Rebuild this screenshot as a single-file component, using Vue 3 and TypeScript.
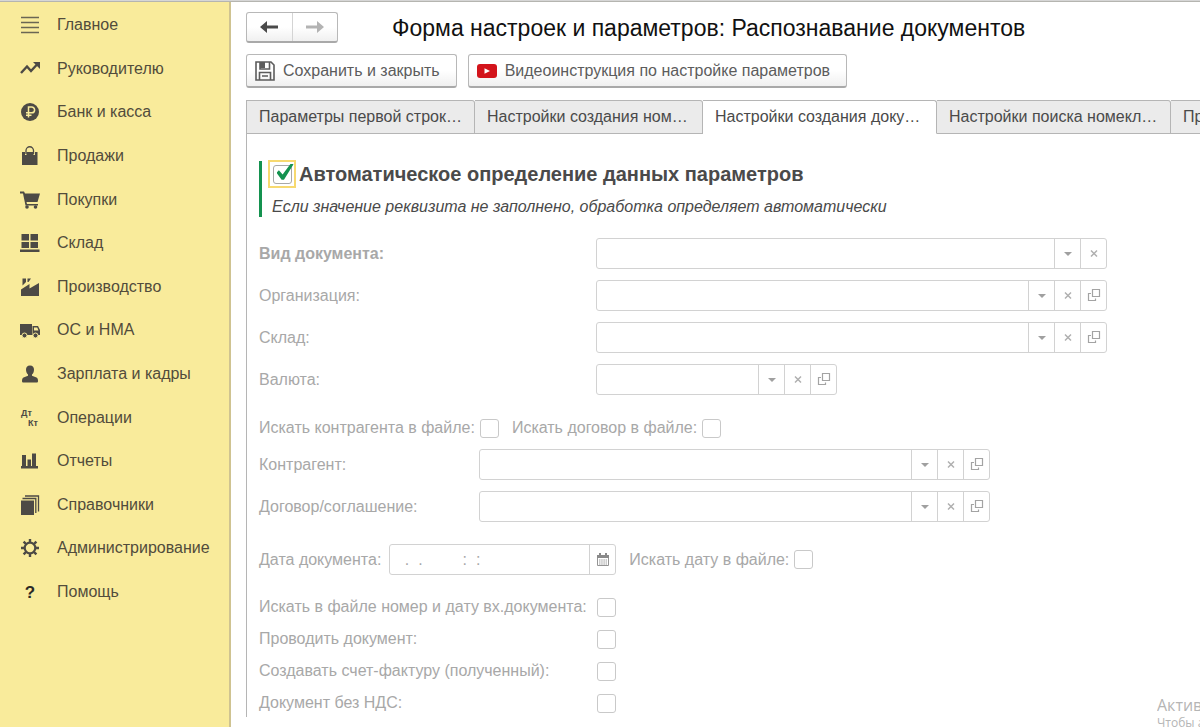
<script setup lang="ts">
import { ref } from 'vue'

interface Section { id: string; title: string }
interface PickerField { id: string; label: string; bold?: boolean; size: 'wide' | 'short'; open: boolean }
interface Flag { id: string; label: string }

const sections: Section[] = [
  { id: 'main', title: 'Главное' },
  { id: 'manager', title: 'Руководителю' },
  { id: 'bank', title: 'Банк и касса' },
  { id: 'sales', title: 'Продажи' },
  { id: 'purchases', title: 'Покупки' },
  { id: 'stock', title: 'Склад' },
  { id: 'production', title: 'Производство' },
  { id: 'assets', title: 'ОС и НМА' },
  { id: 'salary', title: 'Зарплата и кадры' },
  { id: 'operations', title: 'Операции' },
  { id: 'reports', title: 'Отчеты' },
  { id: 'catalogs', title: 'Справочники' },
  { id: 'admin', title: 'Администрирование' },
  { id: 'help', title: 'Помощь' },
]

const tabs: string[] = [
  'Параметры первой строк…',
  'Настройки создания ном…',
  'Настройки создания доку…',
  'Настройки поиска номекл…',
  'Прочие настройки',
]
const activeTab = ref(2)
const autoDetect = ref(true)
const documentDate = ref(' .  .         :  :  ')

const mainFields: PickerField[] = [
  { id: 'kind', label: 'Вид документа:', bold: true, size: 'wide', open: false },
  { id: 'org', label: 'Организация:', size: 'wide', open: true },
  { id: 'store', label: 'Склад:', size: 'wide', open: true },
  { id: 'currency', label: 'Валюта:', size: 'short', open: true },
]
const partnerFields: PickerField[] = [
  { id: 'partner', label: 'Контрагент:', size: 'wide', open: true },
  { id: 'contract', label: 'Договор/соглашение:', size: 'wide', open: true },
]
const groups = [
  { name: 'main', fields: mainFields },
  { name: 'partner', fields: partnerFields },
]
const searchFlags: Flag[] = [
  { id: 'find-partner', label: 'Искать контрагента в файле:' },
  { id: 'find-contract', label: 'Искать договор в файле:' },
]
const flags: Flag[] = [
  { id: 'find-number', label: 'Искать в файле номер и дату вх.документа:' },
  { id: 'post', label: 'Проводить документ:' },
  { id: 'invoice', label: 'Создавать счет-фактуру (полученный):' },
  { id: 'no-vat', label: 'Документ без НДС:' },
]
</script>

<template>
  <div class="app">
    <div class="strip"></div>
    <div class="body">
      <nav class="sidebar">
        <a v-for="s in sections" :key="s.id" href="#" class="section">
          <svg class="section-icon" viewBox="0 0 20 20" aria-hidden="true">
            <path v-if="s.id === 'main'" d="M1 2.500h18M1 7.500h18M1 12.500h18M1 17.500h18" fill="none" stroke="#6b6653" stroke-width="1.300" />
            <g v-else-if="s.id === 'manager'">
              <path d="M1 14L7 7.500l4 4.500L17 5.500" fill="none" stroke="#4d4a45" stroke-width="2.400" />
              <path d="M13 3h7v7z" />
            </g>
            <g v-else-if="s.id === 'bank'">
              <circle cx="10" cy="10" r="9" />
              <path d="M8.500 15.500V5h3.200a2.900 2.900 0 0 1 0 5.800H6M6 13.200h5.500" fill="none" stroke="#f9eb9b" stroke-width="1.500" />
            </g>
            <g v-else-if="s.id === 'sales'">
              <path d="M2 6h3v3h1.500V6h7v3H15V6h2.500v13H2z" />
              <path d="M6 8V4.500a3.700 3.700 0 0 1 7.500 0V8" fill="none" stroke="#4d4a45" stroke-width="1.300" />
            </g>
            <g v-else-if="s.id === 'purchases'">
              <path d="M0 1.500h4l1 2h15l-2.500 8.500H6.500l.5 2h11v1.500H5.500L3 3.500H0z" />
              <circle cx="7" cy="17" r="1.800" /><circle cx="15.500" cy="17" r="1.800" />
            </g>
            <path v-else-if="s.id === 'stock'" d="M1.500 1h7.500v6.500H1.500zM10.500 1H18v6.500h-7.500zM1.500 9H9v6H1.500zM10.500 9H18v6h-7.500zM0 16.500h19.500V19H0z" />
            <path v-else-if="s.id === 'production'" d="M1 19v-6.500L9.500 7v4.500L19 6v13zM2.500 1.500H6V5L2.500 8.500zM7.500 1.500H11L8.500 5h-1z" />
            <g v-else-if="s.id === 'assets'">
              <path d="M0 4h12v11H0zM12.500 6H18l2 4v5h-7.500z" />
              <path d="M14 7.500h3.200l1.300 3H14z" fill="#f9eb9b" />
              <g stroke="#f9eb9b" stroke-width="1"><circle cx="4.500" cy="15.500" r="2.500" /><circle cx="15.500" cy="15.500" r="2.500" /></g>
            </g>
            <path v-else-if="s.id === 'salary'" d="M10 1.500c2.800 0 4 1.900 4 4.200 0 2.300-1 4-2 4.800v1.200l4.500 1.800c1 .5 1.500 1.500 1.500 3.500 0 1-.5 1.500-1.500 1.500h-13C2.500 18.500 2 18 2 17c0-2 .5-3 1.500-3.500L8 11.700v-1.200c-1-.8-2-2.500-2-4.800 0-2.300 1.200-4.200 4-4.200z" />
            <g v-else-if="s.id === 'operations'" class="mini">
              <text x="1" y="8">Дт</text><text x="8" y="18">Кт</text>
            </g>
            <path v-else-if="s.id === 'reports'" d="M2 4h4v11h1.500V8.500H11V15h1V2.500h4V15h2v2.500H1V15h1z" />
            <g v-else-if="s.id === 'catalogs'">
              <path d="M1 5.500h13V20H1z" />
              <path d="M2.500 3.500h13.300V18M5 1h13.500v15.500" fill="none" stroke="#4d4a45" stroke-width="1.300" />
            </g>
            <g v-else-if="s.id === 'admin'" fill="none" stroke="#4d4a45">
              <circle cx="10" cy="10" r="5.300" stroke-width="2.200" />
              <path d="M10 1v4M10 15v4M1 10h4M15 10h4M3.600 3.600l2.800 2.800M13.600 13.600l2.800 2.800M3.600 16.400l2.800-2.800M13.600 6.400l2.800-2.800" stroke-width="2.400" />
            </g>
            <text v-else class="question" x="10" y="16" text-anchor="middle">?</text>
          </svg>
          <span>{{ s.title }}</span>
        </a>
      </nav>

      <main class="content">
        <header class="heading">
          <div class="history">
            <button type="button" aria-label="Назад">
              <svg viewBox="0 0 18 12"><path d="M7 0v4.500h11v3H7V12L0 6z" fill="#4a4a4a" /></svg>
            </button>
            <button type="button" aria-label="Вперед">
              <svg viewBox="0 0 18 12"><path d="M11 0v4.500H0v3h11V12l7-6z" fill="#b3b3b3" /></svg>
            </button>
          </div>
          <h1>Форма настроек и параметров: Распознавание документов</h1>
        </header>

        <div class="toolbar">
          <button type="button" class="command">
            <svg class="save-icon" viewBox="0 0 20 20" fill="none" stroke="#5c5c5c" stroke-width="1.600">
              <path d="M1 1h15l3 3v15H1z" />
              <path d="M5 1v7h9.500V1M4.500 19v-7.500h11V19M7 15h6" />
              <path d="M5 1h5v6H5z" fill="#5c5c5c" stroke="none" />
            </svg>
            <span>Сохранить и закрыть</span>
          </button>
          <button type="button" class="command">
            <svg class="video-icon" viewBox="0 0 20 14">
              <rect width="20" height="14" rx="3" fill="#d3141b" /><path d="M7.500 4.200v5.600L13 7z" fill="#fff" />
            </svg>
            <span>Видеоинструкция по настройке параметров</span>
          </button>
        </div>

        <div class="tabs" role="tablist">
          <button
            v-for="(t, i) in tabs" :key="t" type="button" role="tab"
            class="tab" :class="{ active: i === activeTab }" :aria-selected="i === activeTab"
            @click="activeTab = i"
          >{{ t }}</button>
        </div>

        <section class="panel">
          <div class="auto">
            <label class="auto-label">
              <span class="focus-ring"><input v-model="autoDetect" type="checkbox" class="box checked-box" /></span>
              <span>Автоматическое определение данных параметров</span>
            </label>
            <p>Если значение реквизита не заполнено, обработка определяет автоматически</p>
          </div>

          <template v-for="g in groups" :key="g.name">
            <div v-if="g.name === 'partner'" class="inline-flags">
              <label v-for="f in searchFlags" :key="f.id" class="flag">
                <span>{{ f.label }}</span><input type="checkbox" class="box" disabled />
              </label>
            </div>
            <div class="fields" :class="g.name">
              <div v-for="f in g.fields" :key="f.id" class="row">
                <label :for="f.id" :class="{ bold: f.bold }">{{ f.label }}</label>
                <div class="field" :class="f.size">
                  <input :id="f.id" type="text" disabled />
                  <button type="button" disabled aria-label="Выбрать"><svg viewBox="0 0 14 14"><path d="M3 5h8L7 9z" fill="#a0a0a0" /></svg></button>
                  <button type="button" disabled aria-label="Очистить"><svg viewBox="0 0 14 14"><path d="M4 3.500l6 6M10 3.500l-6 6" stroke="#b0b0b0" stroke-width="1.500" /></svg></button>
                  <button v-if="f.open" type="button" disabled aria-label="Открыть"><svg viewBox="0 0 14 14" fill="none" stroke="#a3a3a3" stroke-width="1.200"><path d="M5.500 .5h7v7h-7zM4 4.500H1.500v7h7V9.500" /></svg></button>
                </div>
              </div>
            </div>
          </template>

          <div class="date-row">
            <label for="date">Дата документа:</label>
            <div class="field date">
              <input id="date" v-model="documentDate" type="text" disabled />
              <button type="button" disabled aria-label="Календарь">
                <svg viewBox="0 0 14 14">
                  <path d="M1.500 2.500h11v10h-11z" fill="none" stroke="#949494" />
                  <path d="M1 2h12v3H1zM3 0h2v3H3zM9 0h2v3H9z" fill="#8a8a8a" />
                  <path d="M3 7h8M3 9h8M3 11h8" stroke="#9a9a9a" stroke-dasharray="1.500 .7" />
                </svg>
              </button>
            </div>
            <label class="flag"><span>Искать дату в файле:</span><input type="checkbox" class="box" disabled /></label>
          </div>

          <div class="flags">
            <label v-for="f in flags" :key="f.id" class="flag">
              <span>{{ f.label }}</span><input type="checkbox" class="box" disabled />
            </label>
          </div>
        </section>
      </main>
    </div>
    <aside class="activation">
      <div>Активация Windows</div>
      <small>Чтобы активировать Windows, перейдите в раздел «Параметры».</small>
    </aside>
  </div>
</template>

<style>
body { margin: 0; background: #fff; }
</style>

<style scoped>
* { box-sizing: border-box; }
.app {
  position: relative;
  display: flex;
  flex-direction: column;
  height: 100vh;
  overflow: hidden;
  font: 16px/20px "Liberation Sans", Arial, sans-serif;
  color: #4a4a4a;
}
button, input { font: inherit; color: inherit; margin: 0; padding: 0; border: 0; background: none; }
.strip { flex: none; height: 2px; background: #d6d6d6; border-bottom: 1px solid #b5b5b0; }
.body { flex: 1; display: flex; min-height: 0; }
.sidebar {
  flex: 0 0 231px;
  display: grid;
  grid-auto-rows: 44px 43px 44px 44px 43px;
  align-content: start;
  padding-top: 1px;
  background: #f9eb9b;
  border-right: 2px solid #cfc391;
}
.section {
  display: flex;
  align-items: center;
  gap: 17px;
  padding-left: 20px;
  color: #524c3c;
  text-decoration: none;
  white-space: nowrap;
}
.section-icon { width: 20px; height: 20px; fill: #4d4a45; overflow: visible; }
.mini { font-size: 9px; font-weight: bold; }
.question { font-size: 17px; font-weight: bold; fill: #2c2a26; }

.content { flex: 1; min-width: 0; overflow: hidden; padding: 10px 0 10px 15px; display: flex; flex-direction: column; }
.heading { display: flex; align-items: center; gap: 54px; height: 31px; }
.history { display: flex; width: 92px; height: 31px; }
.history, .command {
  border: 1px solid #b8b8b8;
  border-bottom: 2px solid #a9a9a9;
  border-radius: 3px;
  background: linear-gradient(#fff 50%, #f0f0f0);
}
.history button { flex: 1; display: flex; align-items: center; justify-content: center; }
.history button + button { border-left: 1px solid #d4d4d4; }
.history svg { width: 18px; height: 12px; }
h1 { margin: 0; font-size: 23px; line-height: 28px; font-weight: normal; color: #111; white-space: nowrap; }
.toolbar { display: flex; gap: 11px; margin-top: 11px; }
.command { display: flex; align-items: center; gap: 8px; height: 34px; padding: 0 16px 0 8px; white-space: nowrap; color: #5c5c5c; }
.save-icon { width: 20px; height: 20px; }
.video-icon { width: 20px; height: 14px; }

.tabs { flex: none; display: flex; margin-top: 12px; height: 34px; border-left: 1px solid #b5b5b5; }
.tab {
  flex: 0 0 234px;
  padding: 0 12px;
  text-align: left;
  white-space: nowrap;
  overflow: hidden;
  background: #ebebeb;
  border: solid #b5b5b5;
  border-width: 1px 1px 1px 0;
  border-top-right-radius: 3px;
}
.tab:nth-child(-n+2) { flex-basis: 228px; }
.tab.active { background: #fff; border-bottom-color: #fff; }
.panel { flex: 1; min-height: 0; padding: 27px 12px 0; border-left: 1px solid #b5b5b5; color: #a8a8a8; }
.auto { height: 56px; border-left: 3px solid #14924f; padding-left: 6px; color: #4a4a4a; }
.auto-label { display: flex; align-items: center; gap: 3px; height: 26px; font-size: 20px; font-weight: bold; white-space: nowrap; }
.focus-ring { display: flex; align-items: center; justify-content: center; width: 28px; height: 28px; border: 2px solid #f7d970; }
.auto p { margin: 10px 0 0 4px; font-style: italic; white-space: nowrap; }
.box { appearance: none; flex: none; width: 19px; height: 19px; border: 1px solid #c9c9c9; border-radius: 3px; background: #fff; }
.checked-box { position: relative; border-color: #a8a8a8; }
.checked-box:checked::after {
  content: "";
  position: absolute;
  left: 3px;
  top: -2px;
  width: 17px;
  height: 17px;
  background: #14924f;
  clip-path: polygon(0 55%, 14% 40%, 36% 64%, 84% 0, 100% 5%, 44% 95%, 30% 95%);
}
.fields { display: flex; flex-direction: column; gap: 11px; margin-top: 21px; }
.fields.partner { margin-top: 12px; }
.row { display: flex; align-items: center; }
.row > label { flex: 0 0 337px; }
.partner .row > label { flex-basis: 220px; }
.bold { font-weight: bold; }
.field { display: flex; height: 31px; border: 1px solid #d2d2d2; border-radius: 3px; overflow: hidden; }
.field.wide { flex: 0 1 511px; }
.field.short { flex: 0 1 241px; }
.field.date { flex: 0 1 227px; margin-right: 5px; }
.field input { flex: 1; min-width: 0; padding: 0 10px; }
.field button { flex: 0 0 26px; display: flex; align-items: center; justify-content: center; border-left: 1px solid #d2d2d2; }
.field svg { flex: none; width: 14px; height: 14px; }
.inline-flags { display: flex; gap: 13px; margin-top: 24px; }
.flag { display: flex; align-items: center; gap: 5px; height: 18px; white-space: nowrap; }
.date-row { display: flex; align-items: center; gap: 8px; margin-top: 22px; }
.date-row > label:first-child { white-space: nowrap; }
.flags { display: flex; flex-direction: column; gap: 14px; width: 357px; margin-top: 23px; }
.flags .flag { justify-content: space-between; }
.activation {
  position: absolute;
  left: calc(100% - 43px);
  bottom: -4px;
  width: 43px;
  overflow: hidden;
  white-space: nowrap;
  font-family: "Open Sans", sans-serif;
  color: #b5b5b5;
}
.activation small { display: block; font-size: 12px; line-height: 16px; }
</style>
